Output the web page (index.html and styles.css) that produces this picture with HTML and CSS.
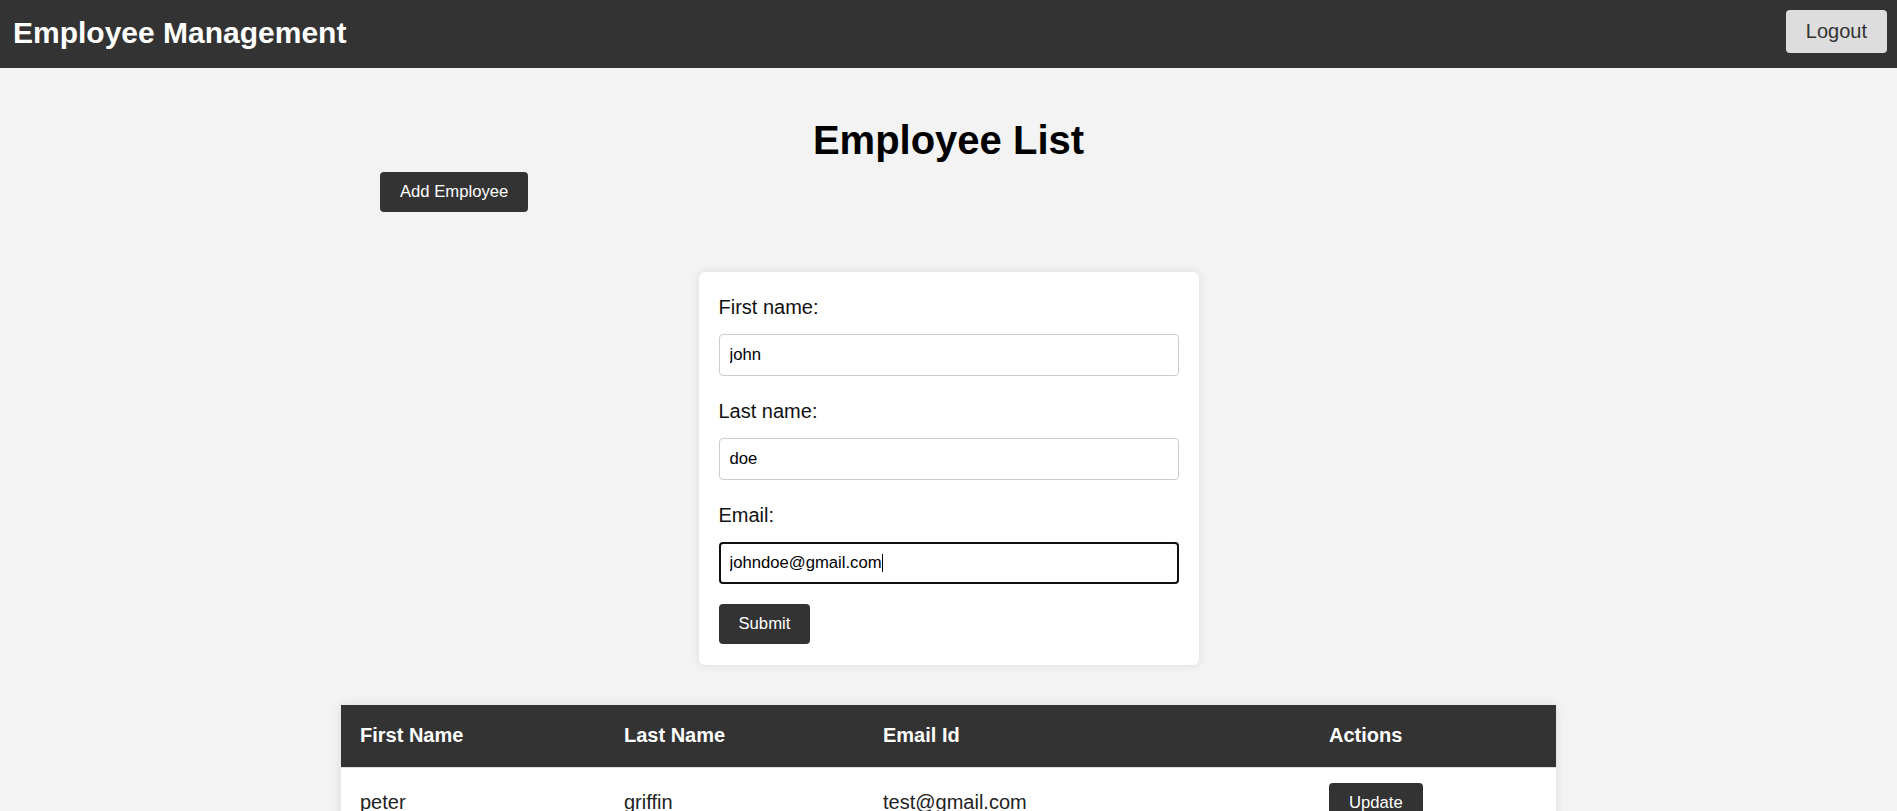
FILE: index.html
```html
<!DOCTYPE html>
<html lang="en">
<head>
<meta charset="utf-8">
<title>Employee Management</title>
<link rel="stylesheet" href="styles.css">
</head>
<body>
<header class="topbar">
  <h1 class="brand">Employee Management</h1>
  <button class="logout" type="button">Logout</button>
</header>
<main class="main">
  <h2 class="page-title">Employee List</h2>
  <div class="toolbar">
    <button class="btn" type="button">Add Employee</button>
  </div>
  <form class="card">
    <div class="field">
      <label class="label" for="fn">First name:</label>
      <input class="input" id="fn" type="text" value="john">
    </div>
    <div class="field">
      <label class="label" for="ln">Last name:</label>
      <input class="input" id="ln" type="text" value="doe">
    </div>
    <div class="field field-last">
      <label class="label" for="em">Email:</label>
      <div class="input-wrap">
        <input class="input input-focused" id="em" type="text" value="johndoe@gmail.com">
        <span class="caret"></span>
      </div>
    </div>
    <button class="btn" type="button">Submit</button>
  </form>
  <table class="table">
    <thead>
      <tr>
        <th class="c1">First Name</th>
        <th class="c2">Last Name</th>
        <th class="c3">Email Id</th>
        <th class="c4">Actions</th>
      </tr>
    </thead>
    <tbody>
      <tr>
        <td>peter</td>
        <td>griffin</td>
        <td>test@gmail.com</td>
        <td><button class="btn" type="button">Update</button></td>
      </tr>
    </tbody>
  </table>
</main>
</body>
</html>
```
FILE: styles.css
```css
* { box-sizing: border-box; }
html, body { margin: 0; padding: 0; }
body {
  background: #f3f3f3;
  font-family: "Liberation Sans", Arial, sans-serif;
  color: #111;
  overflow: hidden;
}
.topbar {
  height: 68px;
  background: #333;
  display: flex;
  justify-content: space-between;
  align-items: flex-start;
  padding: 10px 10px 0 13px;
}
.brand {
  margin: 0;
  color: #fff;
  font-size: 30px;
  font-weight: bold;
  line-height: 46px;
}
.logout {
  background: #dddddd;
  color: #333;
  border: none;
  border-radius: 4px;
  font-family: "Liberation Sans", Arial, sans-serif;
  font-size: 20px;
  line-height: 23px;
  padding: 10px 20px;
}
.main { padding-top: 49px; }
.page-title {
  margin: 0 0 9px;
  text-align: center;
  font-size: 40px;
  line-height: 46px;
  font-weight: bold;
  color: #000;
}
.toolbar { width: 1137px; margin: 0 auto; }
.btn {
  background: #333;
  color: #fff;
  border: none;
  border-radius: 4px;
  font-family: "Liberation Sans", Arial, sans-serif;
  font-size: 16.67px;
  line-height: 20px;
  padding: 10px 20px;
  cursor: pointer;
}
.card {
  width: 500px;
  margin: 60px auto 40px;
  background: #fff;
  border-radius: 6px;
  box-shadow: 0 0 10px rgba(0,0,0,0.1);
  padding: 24px 20px 21px;
}
.field { margin-bottom: 24px; }
.field-last { margin-bottom: 20px; }
.label {
  display: block;
  font-size: 20px;
  line-height: 23px;
  margin-bottom: 15px;
  color: #111;
}
.input-wrap { position: relative; }
.input {
  display: block;
  width: 100%;
  height: 42px;
  border: 1px solid #ccc;
  border-radius: 4px;
  padding: 0 10px;
  font-family: "Liberation Sans", Arial, sans-serif;
  font-size: 16.67px;
  color: #000;
  background: #fff;
  outline: none;
}
.input-focused {
  border: 2px solid #101010;
  padding: 0 9px;
}
.caret {
  position: absolute;
  left: 163px;
  top: 12px;
  width: 1px;
  height: 18px;
  background: #000;
}
.table {
  width: 1215px;
  margin: 0 auto;
  border-collapse: collapse;
  background: #fff;
  box-shadow: 0 0 10px rgba(0,0,0,0.1);
  font-size: 20px;
}
.table th {
  background: #333;
  color: #fff;
  font-weight: bold;
  text-align: left;
  height: 62px;
  padding: 0 19px;
  border-bottom: 1px solid #ddd;
}
.table td {
  padding: 15px 19px;
  color: #222;
  vertical-align: middle;
}
.c1 { width: 264px; }
.c2 { width: 259px; }
.c3 { width: 446px; }
.c4 { width: 246px; }
```
